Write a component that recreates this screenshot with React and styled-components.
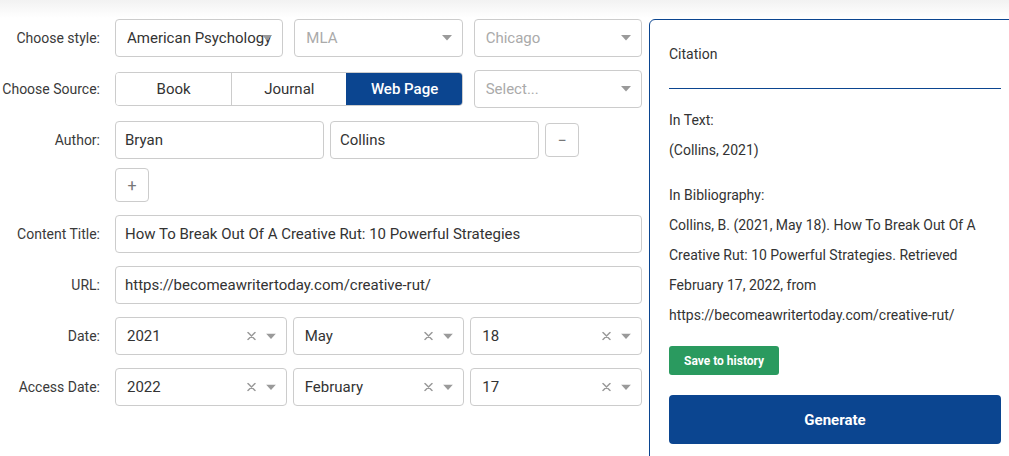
import styled, { createGlobalStyle } from "styled-components";

const GlobalStyle = createGlobalStyle`
    html, body {
        margin: 0;
        padding: 0;
        overflow: hidden;
        background: linear-gradient(to bottom, #f2f2f2 0px, #ffffff 18px);
        font-family: Roboto, "Liberation Sans", Arial, sans-serif;
        color: #333;
    }
    * {
        box-sizing: border-box;
    }
`;

/* Icons ---------------------------*/
const Caret = () => (
    <svg width="10" height="6" viewBox="0 0 10 6">
        <path d="M0 0 L10 0 L5 5.5 Z" fill="#9a9a9a" />
    </svg>
);

const Clear = () => (
    <svg width="9" height="9" viewBox="0 0 9 9">
        <path
            d="M1 1 L8 8 M8 1 L1 8"
            stroke="#9a9a9a"
            strokeWidth="1.5"
            strokeLinecap="round"
        />
    </svg>
);

/* Parts ---------------------------*/
const Select = ({ value, placeholder, clearable }) => (
    <SelectBox>
        <SelectValue $placeholder={!value}>{value || placeholder}</SelectValue>
        <SelectIcons>
            {clearable && <Clear />}
            <Caret />
        </SelectIcons>
    </SelectBox>
);

const App = () => {
    return (
        <>
            <GlobalStyle />
            <Page>
                <FormStyled>
                    {/* Style */}
                    <Row>
                        <Label>Choose style:</Label>
                        <Grid3>
                            <Select value="American Psychology" />
                            <Select placeholder="MLA" />
                            <Select placeholder="Chicago" />
                        </Grid3>
                    </Row>

                    {/* Source */}
                    <Row>
                        <Label>Choose Source:</Label>
                        <Grid3>
                            <Segments>
                                <Segment>Book</Segment>
                                <Segment>Journal</Segment>
                                <Segment $active>Web Page</Segment>
                            </Segments>
                            <Select placeholder="Select..." />
                        </Grid3>
                    </Row>

                    {/* Author */}
                    <Row>
                        <Label>Author:</Label>
                        <AuthorGrid>
                            <TextInput defaultValue="Bryan" />
                            <TextInput defaultValue="Collins" />
                            <SmallButton>−</SmallButton>
                        </AuthorGrid>
                    </Row>
                    <Row $tight>
                        <Label />
                        <SmallButton>+</SmallButton>
                    </Row>

                    {/* Title */}
                    <Row>
                        <Label>Content Title:</Label>
                        <TextInput defaultValue="How To Break Out Of A Creative Rut: 10 Powerful Strategies" />
                    </Row>

                    {/* URL */}
                    <Row>
                        <Label>URL:</Label>
                        <TextInput defaultValue="https://becomeawritertoday.com/creative-rut/" />
                    </Row>

                    {/* Dates */}
                    <Row>
                        <Label>Date:</Label>
                        <DateGrid>
                            <Select value="2021" clearable />
                            <Select value="May" clearable />
                            <Select value="18" clearable />
                        </DateGrid>
                    </Row>
                    <Row>
                        <Label>Access Date:</Label>
                        <DateGrid>
                            <Select value="2022" clearable />
                            <Select value="February" clearable />
                            <Select value="17" clearable />
                        </DateGrid>
                    </Row>
                </FormStyled>

                <Panel>
                    <PanelTitle>Citation</PanelTitle>
                    <PanelLine $gap="16px">In Text:</PanelLine>
                    <PanelLine>(Collins, 2021)</PanelLine>
                    <PanelLine $gap="15px">In Bibliography:</PanelLine>
                    <PanelLine>
                        Collins, B. (2021, May 18). How To Break Out Of A Creative
                        Rut: 10 Powerful Strategies. Retrieved February 17, 2022,
                        from https://becomeawritertoday.com/creative-rut/
                    </PanelLine>
                    <SaveButton>Save to history</SaveButton>
                    <GenerateButton>Generate</GenerateButton>
                </Panel>
            </Page>
        </>
    );
};

export default App;

/* Styles ---------------------------*/
const Page = styled.div`
    display: flex;
    align-items: flex-start;
    gap: 7px;
    padding-top: 19px;
    width: 1040px;
    height: 456px;
    overflow: hidden;
`;

const FormStyled = styled.form`
    width: 642px;
    flex-shrink: 0;
    display: flex;
    flex-direction: column;
`;

const Row = styled.div`
    display: flex;
    align-items: center;
    margin-bottom: 13px;
    margin-top: ${(p) => (p.$tight ? "-4px" : "0")};
`;

const Label = styled.label`
    width: 115px;
    flex-shrink: 0;
    padding-right: 15px;
    text-align: right;
    font-size: 14px;
    color: #3a3a3a;
    white-space: nowrap;
`;

const Grid3 = styled.div`
    flex: 1;
    display: grid;
    grid-template-columns: repeat(3, 1fr);
    gap: 11px;
    align-items: center;
`;

const DateGrid = styled.div`
    flex: 1;
    display: grid;
    grid-template-columns: repeat(3, 1fr);
    gap: 6px;
`;

const AuthorGrid = styled.div`
    display: grid;
    grid-template-columns: 209px 209px 34px;
    gap: 6px;
    align-items: center;
`;

const SelectBox = styled.div`
    position: relative;
    height: 38px;
    border: 1px solid #cccccc;
    border-radius: 4px;
    background: #fff;
    display: flex;
    align-items: center;
    padding: 0 10px 0 11px;
    font-size: 15px;
    overflow: hidden;
`;

const SelectValue = styled.span`
    flex: 1;
    white-space: nowrap;
    overflow: hidden;
    color: ${(p) => (p.$placeholder ? "#aaaaaa" : "#333333")};
`;

const SelectIcons = styled.span`
    position: absolute;
    right: 10px;
    top: 50%;
    transform: translateY(-50%);
    display: flex;
    align-items: center;
    gap: 10px;
    line-height: 0;
`;

const Segments = styled.div`
    grid-column: span 2;
    display: grid;
    grid-template-columns: repeat(3, 1fr);
    height: 34px;
    border: 1px solid #cccccc;
    border-radius: 4px;
    overflow: hidden;
`;

const Segment = styled.div`
    display: flex;
    align-items: center;
    justify-content: center;
    font-size: 15px;
    font-weight: ${(p) => (p.$active ? 500 : 400)};
    color: ${(p) => (p.$active ? "#ffffff" : "#333333")};
    background: ${(p) => (p.$active ? "#0b4590" : "#ffffff")};
    border-left: 1px solid ${(p) => (p.$active ? "#0b4590" : "#cccccc")};

    &:first-child {
        border-left: none;
    }
`;

const TextInput = styled.input`
    width: 100%;
    height: 38px;
    border: 1px solid #cccccc;
    border-radius: 4px;
    padding: 0 9px;
    font-family: inherit;
    font-size: 15px;
    color: #333;
    outline: none;
`;

const SmallButton = styled.button`
    width: 34px;
    height: 34px;
    border: 1px solid #cccccc;
    border-radius: 4px;
    background: #fff;
    color: #777;
    font-family: inherit;
    font-size: 16px;
    padding: 0;
    display: flex;
    align-items: center;
    justify-content: center;
`;

const Panel = styled.div`
    width: 373px;
    flex-shrink: 0;
    min-height: 460px;
    border: 1.5px solid #0b4590;
    border-radius: 6px 6px 0 0;
    padding: 19px 20px 20px 19px;
    font-size: 14px;
    color: #333;
`;

const PanelTitle = styled.div`
    line-height: 30px;
    padding-bottom: 19px;
    border-bottom: 1.5px solid #0b4590;
`;

const PanelLine = styled.div`
    line-height: 30px;
    margin-top: ${(p) => p.$gap || "0"};
`;

const SaveButton = styled.button`
    display: block;
    margin-top: 16px;
    height: 29px;
    padding: 0 15px;
    border: none;
    border-radius: 3px;
    background: #2a9a5f;
    color: #fff;
    font-family: inherit;
    font-size: 12px;
    font-weight: 700;
`;

const GenerateButton = styled.button`
    display: block;
    width: 100%;
    margin-top: 20px;
    height: 49px;
    border: none;
    border-radius: 4px;
    background: #0b4590;
    color: #fff;
    font-family: inherit;
    font-size: 15px;
    font-weight: 700;
`;
